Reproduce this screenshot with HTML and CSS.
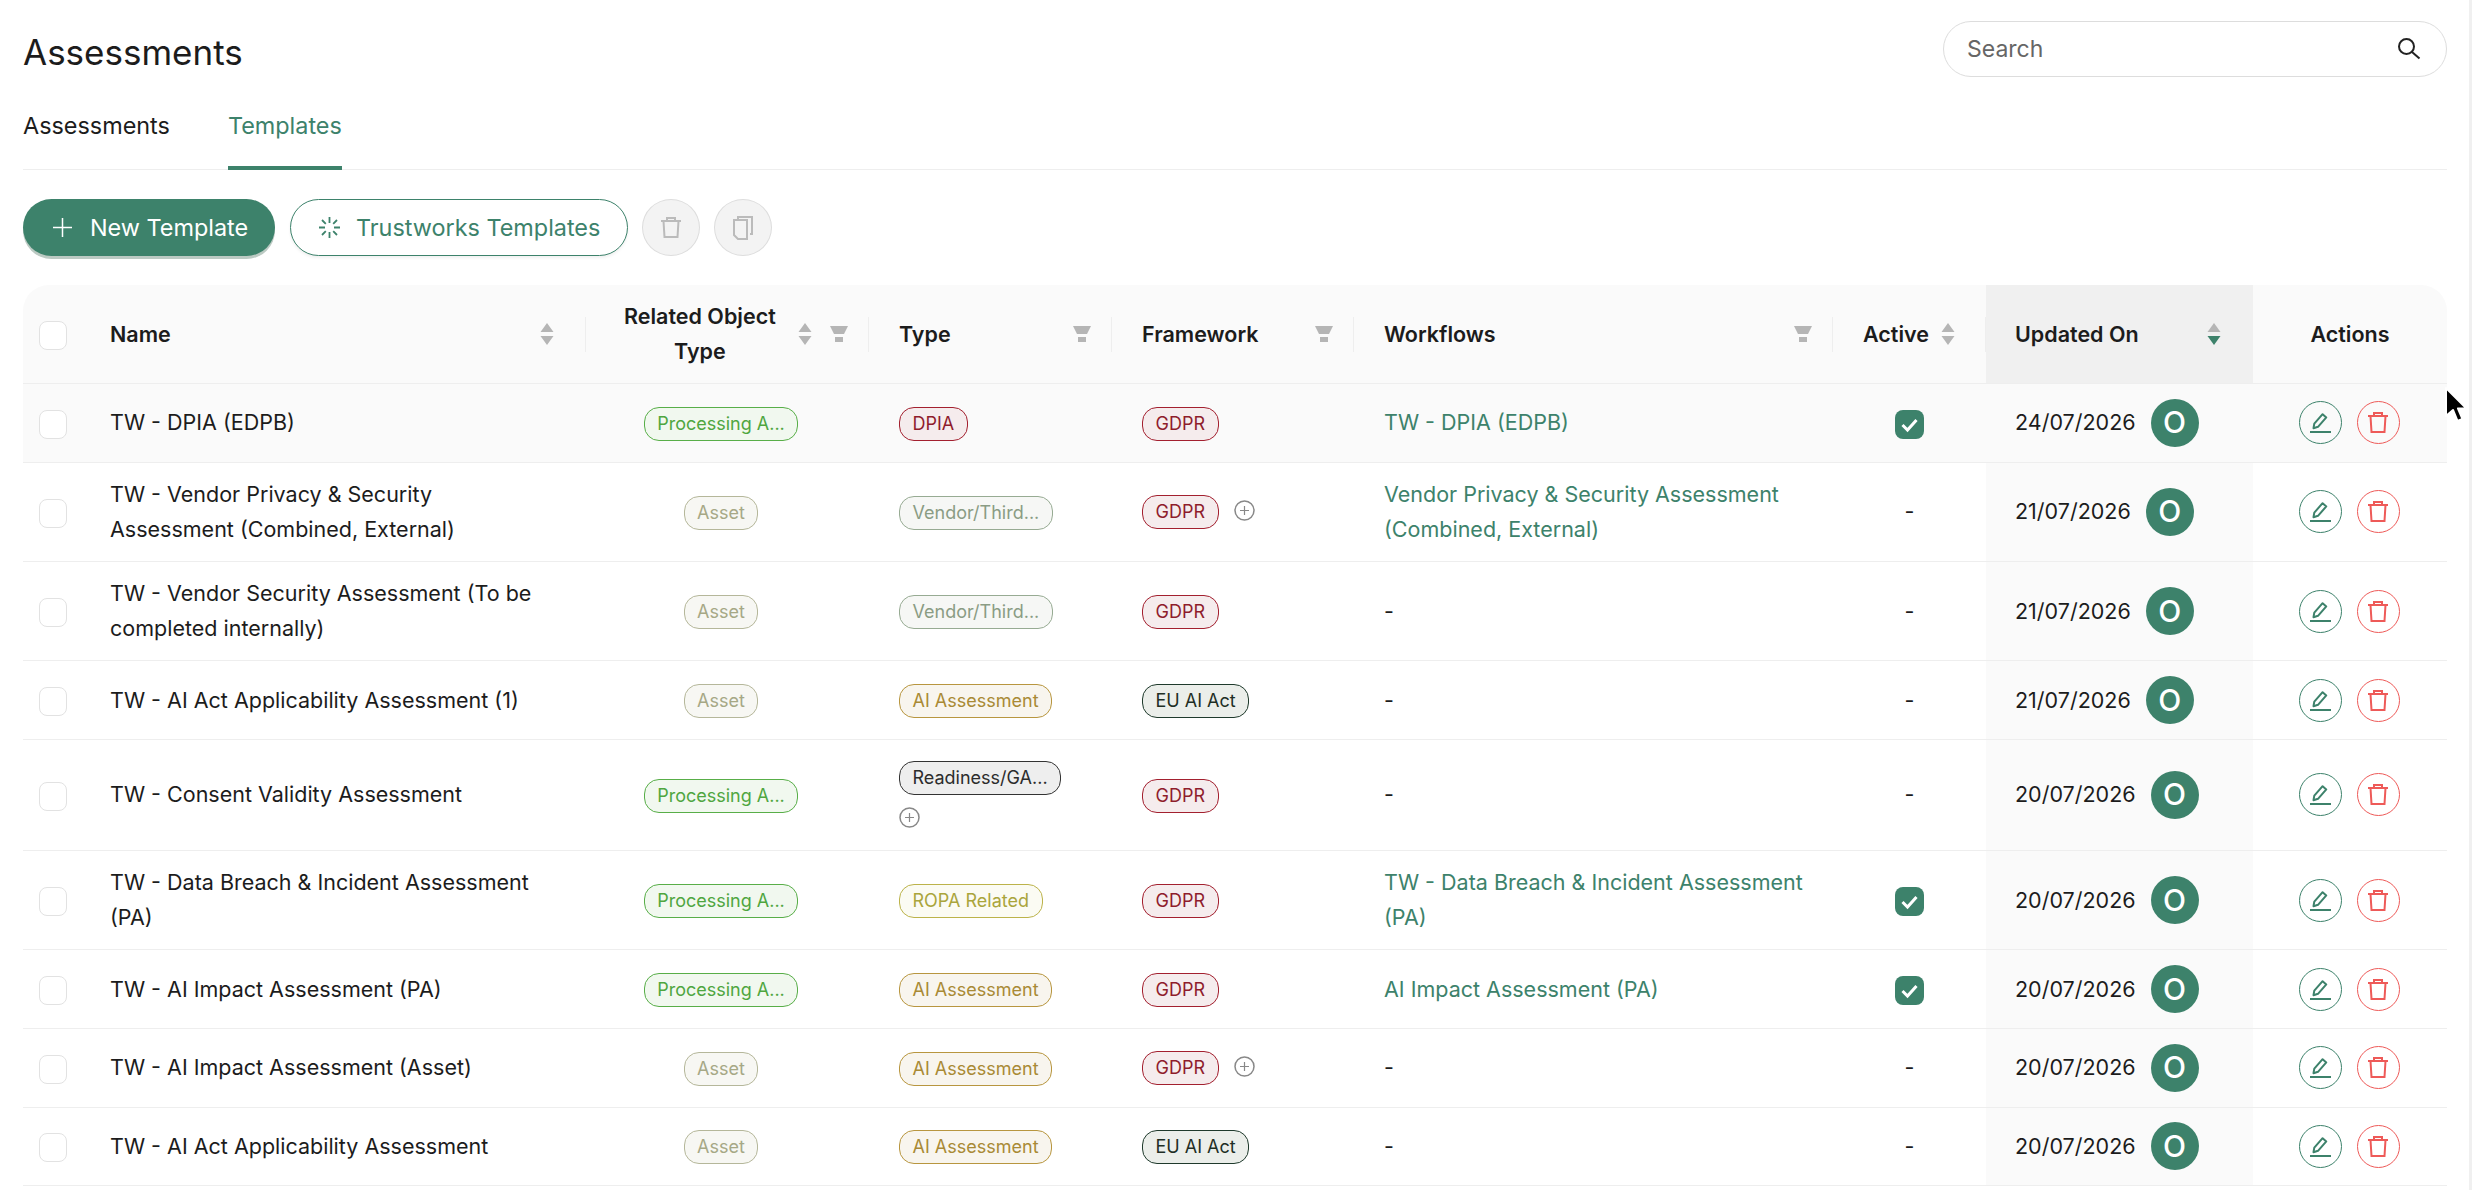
FILE: index.html
```html
<!DOCTYPE html>
<html lang="en">
<head>
  <meta charset="UTF-8">
  <title>Assessments | Trustworks</title>
  <meta name="viewport" content="width=device-width, initial-scale=1.0">
  <link rel="stylesheet" href="styles.css">
</head>
<body>
  <!-- Shared icons -->
  <svg class="icon-defs" aria-hidden="true">
    <symbol id="i-sort" viewBox="0 0 14 22"><path d="M7 0l6.5 9H.5zM7 22L.5 13h13z"/></symbol>
    <symbol id="i-filter" viewBox="0 0 18 16"><path d="M0 0h18l-4 8H4zM5 11h8v5H5z"/></symbol>
    <symbol id="i-plus" viewBox="0 0 21 21"><circle cx="10.5" cy="10.5" r="9.5" fill="none" stroke="currentColor" stroke-width="1.5"/><path d="M10.5 6v9M6 10.5h9" fill="none" stroke="currentColor" stroke-width="1.2"/></symbol>
    <symbol id="i-edit" viewBox="0 0 21 21"><path d="M3.5 16.2l.8-4.6L12.6 2.2l3.7 3.2-8.3 9.4z" fill="none" stroke="currentColor" stroke-width="2" stroke-linejoin="round"/><path d="M0 20h21" stroke="currentColor" stroke-width="2"/></symbol>
    <symbol id="i-trash" viewBox="0 0 20 21"><path d="M0 4h20M6 4V1h8v3M2.5 4l1 16h13l1-16" fill="none" stroke="currentColor" stroke-width="2"/></symbol>
    <symbol id="i-check" viewBox="0 0 29 29"><path d="M7.5 15l5 5 9-10" fill="none" stroke="#fff" stroke-width="3"/></symbol>
  </svg>

  <div class="page">
    <div class="top-bar">
      <h1>Assessments</h1>
      <div class="search">
        <input type="text" placeholder="Search">
        <svg width="24" height="24" viewBox="0 0 24 24"><circle cx="9.5" cy="9.5" r="7.5" fill="none" stroke="#222" stroke-width="2"/><path d="M15 15l7.5 6.5" stroke="#222" stroke-width="2"/></svg>
      </div>
    </div>

    <div class="tabs">
      <a href="#" class="tab">Assessments</a>
      <a href="#" class="tab active">Templates</a>
    </div>

    <div class="toolbar">
      <button class="btn btn-primary">
        <svg width="19" height="19" viewBox="0 0 19 19"><path d="M9.5 0v19M0 9.5h19" stroke="#fff" stroke-width="1.5"/></svg>
        New Template
      </button>
      <button class="btn btn-outline">
        <svg width="21" height="21" viewBox="0 0 21 21"><path d="M10.5 0v6M10.5 15v6M0 10.5h6M15 10.5h6M3 3l3.8 3.8M14.2 14.2L18 18M18 3l-3.8 3.8M6.8 14.2L3 18" stroke="#3d826b" stroke-width="1.8"/></svg>
        Trustworks Templates
      </button>
      <button class="btn-round">
        <svg class="icon-trash" width="20" height="21"><use href="#i-trash"/></svg>
      </button>
      <button class="btn-round">
        <svg width="20" height="24" viewBox="0 0 20 24"><path d="M5 3V1h14v17h-2" fill="none" stroke="#bbb" stroke-width="2"/><path d="M1 4h13v19H5l-4-4z" fill="none" stroke="#bbb" stroke-width="2"/></svg>
      </button>
    </div>

    <table class="grid">
      <colgroup>
        <col class="c-check"><col class="c-name"><col class="c-related"><col class="c-type"><col class="c-framework"><col class="c-flow"><col class="c-active"><col class="c-date"><col class="c-actions">
      </colgroup>
      <thead>
        <tr>
          <th class="cell-check"><span class="box"></span></th>
          <th class="th-name"><div class="th-inner"><span>Name</span><svg class="sort"><use href="#i-sort"/></svg></div></th>
          <th class="th-related"><div class="th-inner"><span class="related-title">Related Object<br>Type</span><svg class="sort"><use href="#i-sort"/></svg><svg class="filter"><use href="#i-filter"/></svg></div></th>
          <th><div class="th-inner"><span>Type</span><svg class="filter"><use href="#i-filter"/></svg></div></th>
          <th><div class="th-inner"><span>Framework</span><svg class="filter"><use href="#i-filter"/></svg></div></th>
          <th><div class="th-inner"><span>Workflows</span><svg class="filter"><use href="#i-filter"/></svg></div></th>
          <th class="th-active"><div class="th-inner"><span>Active</span><svg class="sort"><use href="#i-sort"/></svg></div></th>
          <th class="th-date"><div class="th-inner"><span>Updated On</span><svg class="sort" viewBox="0 0 14 22"><path d="M7 0l6.5 9H.5z" fill="#b5b5b5"/><path d="M7 22L.5 13h13z" fill="#3d826b"/></svg></div></th>
          <th class="th-actions">Actions</th>
        </tr>
      </thead>
      <tbody>
        <tr class="hover">
          <td class="cell-check"><span class="box"></span></td>
          <td class="cell-name">TW - DPIA (EDPB)</td>
          <td class="cell-related"><span class="pill p-processing">Processing A...</span></td>
          <td><span class="pill p-red">DPIA</span></td>
          <td><span class="pill p-red">GDPR</span></td>
          <td class="cell-flow"><a href="#">TW - DPIA (EDPB)</a></td>
          <td class="cell-active"><svg class="tick"><use href="#i-check"/></svg></td>
          <td class="cell-date"><div class="date-wrap">24/07/2026<span class="avatar">O</span></div></td>
          <td><div class="row-actions"><button class="act act-edit"><svg width="21" height="21"><use href="#i-edit"/></svg></button><button class="act act-del"><svg width="20" height="21"><use href="#i-trash"/></svg></button></div></td>
        </tr>
        <tr>
          <td class="cell-check"><span class="box"></span></td>
          <td class="cell-name">TW - Vendor Privacy &amp; Security Assessment (Combined, External)</td>
          <td class="cell-related"><span class="pill p-asset">Asset</span></td>
          <td><span class="pill p-vendor">Vendor/Third...</span></td>
          <td><div class="tags"><span class="pill p-red">GDPR</span><svg class="more"><use href="#i-plus"/></svg></div></td>
          <td class="cell-flow"><a href="#">Vendor Privacy &amp; Security Assessment (Combined, External)</a></td>
          <td class="cell-active">-</td>
          <td class="cell-date"><div class="date-wrap">21/07/2026<span class="avatar">O</span></div></td>
          <td><div class="row-actions"><button class="act act-edit"><svg width="21" height="21"><use href="#i-edit"/></svg></button><button class="act act-del"><svg width="20" height="21"><use href="#i-trash"/></svg></button></div></td>
        </tr>
        <tr>
          <td class="cell-check"><span class="box"></span></td>
          <td class="cell-name">TW - Vendor Security Assessment (To be completed internally)</td>
          <td class="cell-related"><span class="pill p-asset">Asset</span></td>
          <td><span class="pill p-vendor">Vendor/Third...</span></td>
          <td><span class="pill p-red">GDPR</span></td>
          <td class="cell-flow">-</td>
          <td class="cell-active">-</td>
          <td class="cell-date"><div class="date-wrap">21/07/2026<span class="avatar">O</span></div></td>
          <td><div class="row-actions"><button class="act act-edit"><svg width="21" height="21"><use href="#i-edit"/></svg></button><button class="act act-del"><svg width="20" height="21"><use href="#i-trash"/></svg></button></div></td>
        </tr>
        <tr>
          <td class="cell-check"><span class="box"></span></td>
          <td class="cell-name">TW - AI Act Applicability Assessment (1)</td>
          <td class="cell-related"><span class="pill p-asset">Asset</span></td>
          <td><span class="pill p-ai">AI Assessment</span></td>
          <td><span class="pill p-eu">EU AI Act</span></td>
          <td class="cell-flow">-</td>
          <td class="cell-active">-</td>
          <td class="cell-date"><div class="date-wrap">21/07/2026<span class="avatar">O</span></div></td>
          <td><div class="row-actions"><button class="act act-edit"><svg width="21" height="21"><use href="#i-edit"/></svg></button><button class="act act-del"><svg width="20" height="21"><use href="#i-trash"/></svg></button></div></td>
        </tr>
        <tr class="tall">
          <td class="cell-check"><span class="box"></span></td>
          <td class="cell-name">TW - Consent Validity Assessment</td>
          <td class="cell-related"><span class="pill p-processing">Processing A...</span></td>
          <td><div class="tags tags-wrap"><span class="pill p-grey">Readiness/GA...</span><svg class="more"><use href="#i-plus"/></svg></div></td>
          <td><span class="pill p-red">GDPR</span></td>
          <td class="cell-flow">-</td>
          <td class="cell-active">-</td>
          <td class="cell-date"><div class="date-wrap">20/07/2026<span class="avatar">O</span></div></td>
          <td><div class="row-actions"><button class="act act-edit"><svg width="21" height="21"><use href="#i-edit"/></svg></button><button class="act act-del"><svg width="20" height="21"><use href="#i-trash"/></svg></button></div></td>
        </tr>
        <tr>
          <td class="cell-check"><span class="box"></span></td>
          <td class="cell-name">TW - Data Breach &amp; Incident Assessment (PA)</td>
          <td class="cell-related"><span class="pill p-processing">Processing A...</span></td>
          <td><span class="pill p-ropa">ROPA Related</span></td>
          <td><span class="pill p-red">GDPR</span></td>
          <td class="cell-flow"><a href="#">TW - Data Breach &amp; Incident Assessment (PA)</a></td>
          <td class="cell-active"><svg class="tick"><use href="#i-check"/></svg></td>
          <td class="cell-date"><div class="date-wrap">20/07/2026<span class="avatar">O</span></div></td>
          <td><div class="row-actions"><button class="act act-edit"><svg width="21" height="21"><use href="#i-edit"/></svg></button><button class="act act-del"><svg width="20" height="21"><use href="#i-trash"/></svg></button></div></td>
        </tr>
        <tr>
          <td class="cell-check"><span class="box"></span></td>
          <td class="cell-name">TW - AI Impact Assessment (PA)</td>
          <td class="cell-related"><span class="pill p-processing">Processing A...</span></td>
          <td><span class="pill p-ai">AI Assessment</span></td>
          <td><span class="pill p-red">GDPR</span></td>
          <td class="cell-flow"><a href="#">AI Impact Assessment (PA)</a></td>
          <td class="cell-active"><svg class="tick"><use href="#i-check"/></svg></td>
          <td class="cell-date"><div class="date-wrap">20/07/2026<span class="avatar">O</span></div></td>
          <td><div class="row-actions"><button class="act act-edit"><svg width="21" height="21"><use href="#i-edit"/></svg></button><button class="act act-del"><svg width="20" height="21"><use href="#i-trash"/></svg></button></div></td>
        </tr>
        <tr>
          <td class="cell-check"><span class="box"></span></td>
          <td class="cell-name">TW - AI Impact Assessment (Asset)</td>
          <td class="cell-related"><span class="pill p-asset">Asset</span></td>
          <td><span class="pill p-ai">AI Assessment</span></td>
          <td><div class="tags"><span class="pill p-red">GDPR</span><svg class="more"><use href="#i-plus"/></svg></div></td>
          <td class="cell-flow">-</td>
          <td class="cell-active">-</td>
          <td class="cell-date"><div class="date-wrap">20/07/2026<span class="avatar">O</span></div></td>
          <td><div class="row-actions"><button class="act act-edit"><svg width="21" height="21"><use href="#i-edit"/></svg></button><button class="act act-del"><svg width="20" height="21"><use href="#i-trash"/></svg></button></div></td>
        </tr>
        <tr>
          <td class="cell-check"><span class="box"></span></td>
          <td class="cell-name">TW - AI Act Applicability Assessment</td>
          <td class="cell-related"><span class="pill p-asset">Asset</span></td>
          <td><span class="pill p-ai">AI Assessment</span></td>
          <td><span class="pill p-eu">EU AI Act</span></td>
          <td class="cell-flow">-</td>
          <td class="cell-active">-</td>
          <td class="cell-date"><div class="date-wrap">20/07/2026<span class="avatar">O</span></div></td>
          <td><div class="row-actions"><button class="act act-edit"><svg width="21" height="21"><use href="#i-edit"/></svg></button><button class="act act-del"><svg width="20" height="21"><use href="#i-trash"/></svg></button></div></td>
        </tr>
      </tbody>
    </table>
  </div>

  <div class="scroll-edge"></div>

  <!-- Mouse pointer caught in the screenshot -->
  <svg class="pointer" width="24" height="38" viewBox="0 0 24 38">
    <path d="M3 2v28l7-6 4.5 11 5-2-4.5-10.500h8.500z" fill="#000" stroke="#fff" stroke-width="2" stroke-linejoin="round"/>
  </svg>
</body>
</html>
```

FILE: styles.css
```css
* {
  box-sizing: border-box;
}

html, body {
  height: 100vh;
  overflow: hidden;
}

body {
  margin: 0;
  display: flex;
  background: #fff;
  color: #1c1c1c;
  font-family: Inter, "Noto Sans", sans-serif;
  font-size: 21.5px;
  line-height: 35px;
}

.icon-defs {
  display: none;
}

.page {
  flex: 1;
  min-width: 0;
  padding: 21px 22px 0 23px;
}

.scroll-edge {
  width: 3px;
  background: #f0f0f0;
}

.pointer {
  position: absolute;
  left: 2443px;
  top: 386px;
}

/* Top bar */
.top-bar {
  display: flex;
  justify-content: space-between;
  align-items: center;
  height: 56px;
}

.top-bar h1 {
  margin: 6px 0 0;
  font-size: 35px;
  font-weight: 400;
  line-height: 60px;
}

.search {
  width: 504px;
  height: 56px;
  display: flex;
  align-items: center;
  padding: 0 25px 0 23px;
  border: 1.5px solid #ddd;
  border-radius: 28px;
  background: #fff;
}

.search input {
  flex: 1;
  border: none;
  outline: none;
  padding: 0;
  font: inherit;
  font-size: 23px;
  color: #1c1c1c;
}

.search input::placeholder {
  color: #666;
  opacity: 1;
}

/* Tabs */
.tabs {
  display: flex;
  gap: 58px;
  height: 93px;
  padding-top: 31px;
  border-bottom: 1px solid #eee;
  font-size: 23.4px;
}

.tab {
  height: 62px;
  color: #1c1c1c;
  text-decoration: none;
}

.tab.active {
  color: #3d826b;
  border-bottom: 4px solid #3d826b;
}

/* Toolbar */
.toolbar {
  display: flex;
  align-items: center;
  gap: 14px;
  margin-top: 29px;
}

.btn {
  height: 57px;
  display: flex;
  align-items: center;
  border-radius: 29px;
  font: inherit;
  font-size: 23.4px;
  cursor: pointer;
}

.btn-primary {
  width: 252px;
  gap: 18px;
  margin-right: 1px;
  padding: 0 0 0 30px;
  border: none;
  background: #3d826b;
  color: #fff;
  box-shadow: 0 3px 0 #bccac3;
}

.btn-outline {
  width: 338px;
  gap: 16px;
  padding: 0 0 0 28px;
  border: 1.5px solid #3d826b;
  background: #fff;
  color: #3d826b;
  box-shadow: 0 2px 3px rgba(0, 0, 0, 0.06);
}

.btn-round {
  width: 58px;
  height: 57px;
  display: flex;
  align-items: center;
  justify-content: center;
  padding: 0;
  border: 1.5px solid #ddd;
  border-radius: 50%;
  background: #f3f3f3;
}

.icon-trash {
  color: #bbb;
}

/* Table */
.grid {
  width: 2424px;
  margin-top: 29px;
  table-layout: fixed;
  border-collapse: separate;
  border-spacing: 0;
}

.c-check { width: 59px; }
.c-name { width: 504px; }
.c-related { width: 283px; }
.c-type { width: 243px; }
.c-framework { width: 242px; }
.c-flow { width: 479px; }
.c-active { width: 153px; }
.c-date { width: 267px; }
.c-actions { width: 194px; }

.grid th {
  position: relative;
  height: 99px;
  padding: 0 21px 0 30px;
  background: #fafafa;
  border-bottom: 1px solid #eee;
  font-weight: 600;
  text-align: left;
}

.grid th:first-child {
  border-top-left-radius: 26px;
}

.grid th:last-child {
  border-top-right-radius: 26px;
}

/* Column divider */
.grid th:not(.cell-check):not(.th-date):not(.th-actions)::after {
  content: "";
  position: absolute;
  top: 32px;
  right: 0;
  width: 1px;
  height: 35px;
  background: #eee;
}

.th-inner {
  display: flex;
  align-items: center;
  justify-content: space-between;
}

.grid .th-name {
  padding: 0 32px 0 28px;
}

.grid .th-related {
  padding-left: 38px;
}

.related-title {
  flex-shrink: 0;
  white-space: nowrap;
  text-align: center;
}

.th-related .th-inner {
  justify-content: flex-start;
}

.th-related .sort {
  margin: 0 18px 0 22px;
}

.th-active .th-inner {
  justify-content: flex-start;
  gap: 12px;
}

.grid .th-date {
  padding: 0 32px 0 29px;
  background: #f0f0f0;
}

.grid .th-actions {
  padding: 0;
  text-align: center;
}

.sort {
  width: 14px;
  height: 22px;
  flex-shrink: 0;
  fill: #b5b5b5;
}

.filter {
  width: 18px;
  height: 16px;
  flex-shrink: 0;
  fill: #b5b5b5;
}

.grid td {
  height: 78.6px;
  padding: 14.2px 20px 14.2px 30px;
  border-bottom: 1px solid #eee;
}

.grid .tall td {
  height: 111px;
}

.hover td {
  background: #fafafa;
}

.grid .cell-check {
  padding: 0;
  text-align: center;
}

.box {
  display: inline-block;
  width: 28px;
  height: 29px;
  vertical-align: middle;
  border: 1.5px solid #e2e2e2;
  border-radius: 8px;
  background: #fff;
}

.grid .cell-name {
  padding-left: 28px;
  padding-right: 46px;
}

.grid .cell-related {
  padding: 0 13px 0 0;
  text-align: center;
}

.cell-flow a {
  color: #3d826b;
  text-decoration: none;
}

.grid .cell-active {
  padding: 0;
  text-align: center;
}

.tick {
  display: inline-block;
  width: 29px;
  height: 29px;
  vertical-align: middle;
  border-radius: 8px;
  background: #3d826b;
}

.grid .cell-date {
  padding: 0 0 0 29px;
  background: #fafafa;
}

.date-wrap {
  display: flex;
  align-items: center;
  gap: 15px;
}

.avatar {
  width: 48px;
  height: 48px;
  display: flex;
  align-items: center;
  justify-content: center;
  border-radius: 50%;
  background: #3d826b;
  color: #fff;
  font-size: 30px;
  font-weight: 500;
}

/* Pills */
.pill {
  display: inline-block;
  height: 34px;
  padding: 0 12.5px;
  border: 1.5px solid;
  border-radius: 15px;
  font-size: 18px;
  line-height: 31px;
  white-space: nowrap;
  vertical-align: middle;
}

.p-processing { color: #4fa63f; border-color: #58ae48; background: #f1f8ef; }
.p-red { color: #8f1d2c; border-color: #a3202f; background: #f5eced; }
.p-asset { color: #a6a886; border-color: #b5b79a; background: #f7f7f3; }
.p-vendor { color: #8a9c84; border-color: #97ab93; background: #f6f7f5; }
.p-ai { color: #a98a35; border-color: #b8963f; background: #f8f5ee; }
.p-eu { color: #1f2f25; border-color: #1f3a2c; background: #ebeeea; }
.p-grey { color: #2c2c2c; border-color: #333; background: #eee; }
.p-ropa { color: #aaa53c; border-color: #bcb34a; background: #fbfbf3; }

.tags {
  display: flex;
  flex-wrap: wrap;
  align-items: center;
  gap: 12px 15px;
}

.tags-wrap {
  max-width: 190px;
}

.more {
  width: 21px;
  height: 21px;
  margin-bottom: 3px;
  color: #888;
}

.tags-wrap .more {
  margin-bottom: 0;
}

/* Row actions */
.row-actions {
  display: flex;
  justify-content: center;
  gap: 15px;
  margin-left: -32px;
  margin-right: -20px;
}

.act {
  width: 43px;
  height: 43px;
  display: flex;
  align-items: center;
  justify-content: center;
  padding: 0;
  border: 1.5px solid;
  border-radius: 50%;
  background: #fff;
  cursor: pointer;
}

.hover .act {
  background: #fafafa;
}

.act-edit {
  color: #3d826b;
}

.act-del {
  color: #ee5a58;
}
```
